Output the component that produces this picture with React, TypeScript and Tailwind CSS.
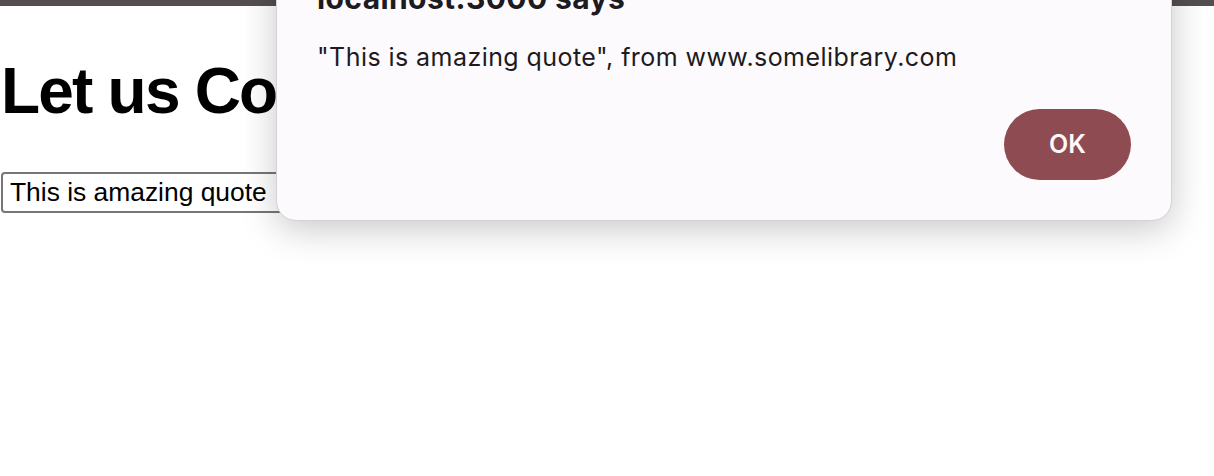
import React from 'react';

const App = () => {
  return (
    <div className="relative w-[1214px] h-[476px] overflow-hidden bg-white">
      {/* Page */}
      <div className="h-[6px] bg-[#554d50]" />
      <main className="font-['Liberation_Sans',Arial,sans-serif] text-black">
        <h1 className="mt-[53px] ml-[1px] text-[64px] font-bold leading-none tracking-[-1.8px] whitespace-nowrap">
          Let us Copy the Quote
        </h1>
        <input
          readOnly
          defaultValue="This is amazing quote"
          className="mt-[49px] ml-[1px] block w-[360px] h-[41px] px-[7px] border-2 border-[#767676] rounded-[4px] text-[26.4px] text-black font-['Liberation_Sans',Arial,sans-serif] outline-none"
        />
      </main>

      {/* Alert dialog */}
      <div className="absolute left-[276px] top-[-45px] w-[896px] rounded-[20px] border border-[#d4d0d6] bg-[#fcfafd] pt-[24px] pb-[40px] px-[40px] shadow-[0_8px_36px_rgba(0,0,0,0.22)] font-['Inter',sans-serif] text-[#1d1b20]">
        <h2 className="text-[30px] leading-[36px] font-bold tracking-[0.4px]">localhost:3000 says</h2>
        <p className="mt-[26px] text-[25px] leading-[30px] tracking-[0.44px]">
          "This is amazing quote", from www.somelibrary.com
        </p>
        <div className="mt-[37px] flex justify-end">
          <button className="w-[127px] h-[71px] rounded-full bg-[#8e4c52] text-[25px] font-semibold text-[#fff8f9]">
            OK
          </button>
        </div>
      </div>
    </div>
  );
};

export default App;
